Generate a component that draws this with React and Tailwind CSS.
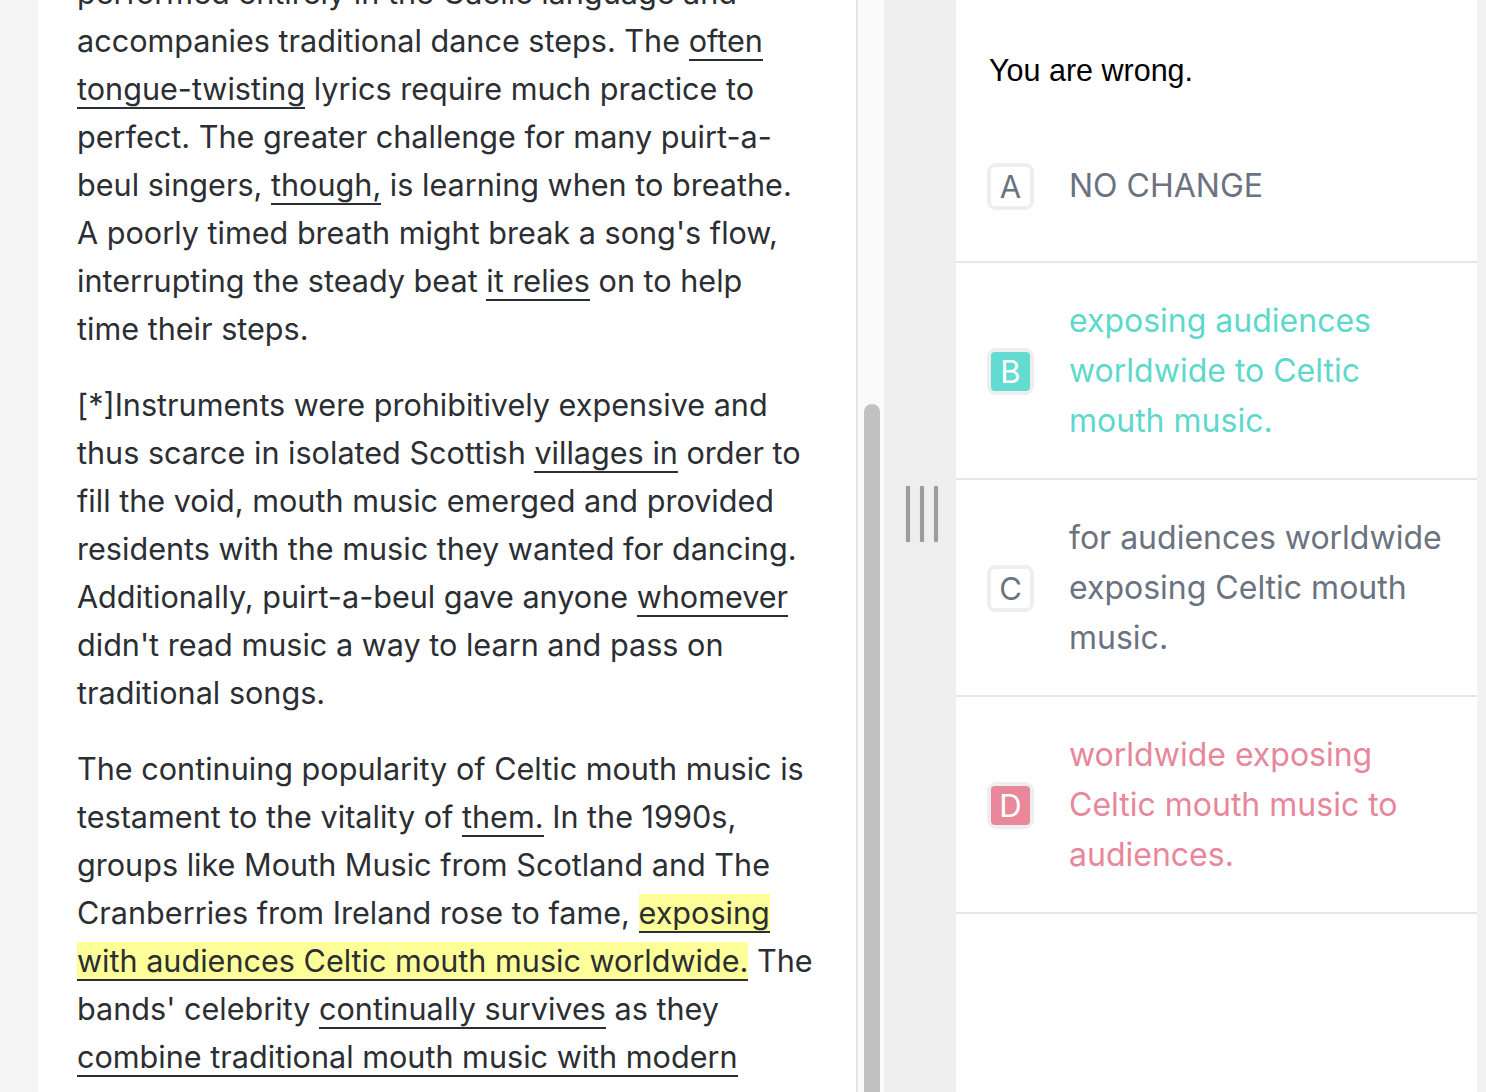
import React from "react";

const U = ({ children }) => (
  <span className="border-b-2 border-[#2b2e33]">{children}</span>
);

const H = ({ children }) => (
  <span className="border-b-2 border-[#2b2e33] bg-[#ffff99]">{children}</span>
);

function Option({ letter, text, tone, pad }) {
  const toneText = {
    gray: "text-[#6b7280]",
    teal: "text-[#5fd8cc]",
    pink: "text-[#e8879a]",
  }[tone];
  const boxInner = {
    gray: "bg-white text-[#6b7280]",
    teal: "bg-[#64dbd0] text-white",
    pink: "bg-[#e8889a] text-white",
  }[tone];
  return (
    <div className={`flex items-center border-b-2 border-[#e3e6ea] pl-[31px] pr-[20px] ${pad}`}>
      <div className="shrink-0 rounded-[9px] bg-[#eeeeee] p-[4px]">
        <div className={`flex h-[39px] w-[39px] items-center justify-center rounded-[4px] text-[31px] leading-none ${boxInner}`}>
          {letter}
        </div>
      </div>
      <div className={`ml-[35px] flex-1 text-[32px] leading-[50px] ${toneText}`}>{text}</div>
    </div>
  );
}

export default function App() {
  return (
    <div className="flex h-[1092px] w-[1486px] overflow-hidden bg-[#f5f5f5] pl-[38px] font-['Inter',sans-serif]">
      {/* Passage panel */}
      <div className="h-full w-[820px] shrink-0 overflow-hidden border-r-2 border-[#e4e4e4] bg-white pl-[39px] pr-[40px] text-[30.6px] leading-[48px] text-[#2b2e33]">
        <div className="mt-[-31px]">
          <p className="mb-[28px]">
            performed entirely in the Gaelic language and accompanies traditional dance steps. The{" "}
            <U>often tongue-twisting</U> lyrics require much practice to perfect. The greater challenge
            for many puirt-a-beul singers, <U>though,</U> is learning when to breathe. A poorly timed
            breath might break a song's flow, interrupting the steady beat <U>it relies</U> on to help
            <br />
            time their steps.
          </p>
          <p className="mb-[28px]">
            [*]Instruments were prohibitively expensive and thus scarce in isolated Scottish{" "}
            <U>villages in</U> order to fill the void, mouth music emerged and provided residents with
            the music they wanted for dancing. Additionally, puirt-a-beul gave anyone <U>whomever</U>{" "}
            didn't read music a way to learn and pass on traditional songs.
          </p>
          <p className="mb-[28px]">
            The continuing popularity of Celtic mouth music is testament to the vitality of{" "}
            <U>them.</U> In the 1990s, groups like Mouth Music from Scotland and The Cranberries from
            Ireland rose to fame, <H>exposing with audiences Celtic mouth music worldwide.</H> The
            bands' celebrity <U>continually survives</U> as they{" "}
            <U>combine traditional mouth music with modern instrumentation.</U>
          </p>
        </div>
      </div>

      {/* Scrollbar track */}
      <div className="flex h-full w-[26px] shrink-0 flex-col bg-[#fafafa] pl-[6px] pr-[4px]">
        <div className="h-[404px] shrink-0" />
        <div className="flex-1 rounded-t-full bg-[#c1c1c1]" />
      </div>

      {/* Resize divider */}
      <div className="flex h-full w-[72px] shrink-0 gap-[10px] bg-[#eeeeee] pl-[22px] pt-[486px]">
        <div className="h-[56px] w-[4px] rounded-[1px] bg-[#9c9c9c] shadow-[0_0_1px_#bbbbbb]" />
        <div className="h-[56px] w-[4px] rounded-[1px] bg-[#9c9c9c] shadow-[0_0_1px_#bbbbbb]" />
        <div className="h-[56px] w-[4px] rounded-[1px] bg-[#9c9c9c] shadow-[0_0_1px_#bbbbbb]" />
      </div>

      {/* Question panel */}
      <div className="h-full w-[521px] shrink-0 bg-white">
        <div className="h-[128px] pl-[33px] pt-[51px] font-['Liberation_Sans',Arial,sans-serif] text-[30.5px] leading-[38px] text-black">
          You are wrong.
        </div>
        <Option letter="A" text="NO CHANGE" tone="gray" pad="pt-[33px] pb-[50px]" />
        <Option
          letter="B"
          text="exposing audiences worldwide to Celtic mouth music."
          tone="teal"
          pad="pt-[33px] pb-[32px]"
        />
        <Option
          letter="C"
          text="for audiences worldwide exposing Celtic mouth music."
          tone="gray"
          pad="pt-[33px] pb-[32px]"
        />
        <Option
          letter="D"
          text="worldwide exposing Celtic mouth music to audiences."
          tone="pink"
          pad="pt-[33px] pb-[32px]"
        />
      </div>

      <div className="h-full flex-1 bg-[#f2f2f2]" />
    </div>
  );
}
